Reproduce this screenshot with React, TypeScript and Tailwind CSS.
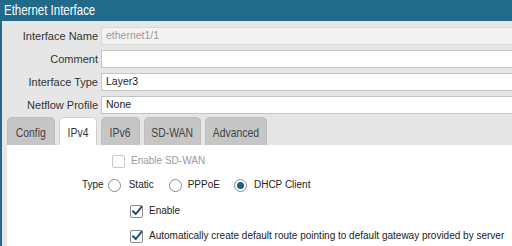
import React from "react";

const sans = "font-['Liberation_Sans',Arial,sans-serif]";

const fields = [
  { label: "Interface Name", value: "ethernet1/1", disabled: true },
  { label: "Comment", value: "" },
  { label: "Interface Type", value: "Layer3" },
  { label: "Netflow Profile", value: "None" },
];

const tabs = [
  { name: "Config", w: "w-[48px]" },
  { name: "IPv4", w: "w-[38px]" },
  { name: "IPv6", w: "w-[39px]" },
  { name: "SD-WAN", w: "w-[57px]" },
  { name: "Advanced", w: "w-[62px]" },
];

const Check = ({ checked, disabled }: { checked?: boolean; disabled?: boolean }) => (
  <span
    className={`relative inline-flex h-[13px] w-[13px] shrink-0 items-center justify-center rounded-[2px] border bg-white ${
      disabled ? "border-[#c8c8c8]" : "border-[#8a8a8a]"
    }`}
  >
    {checked && (
      <svg viewBox="0 0 12 12" className="absolute -top-[1px] left-0 h-[12px] w-[12px]">
        <path d="M2 6.2 L4.8 9 L10.5 1.8" fill="none" stroke="#1d4f7a" strokeWidth="2" strokeLinecap="round" strokeLinejoin="round" />
      </svg>
    )}
  </span>
);

const Radio = ({ checked }: { checked?: boolean }) => (
  <span className="inline-flex h-[13px] w-[13px] shrink-0 items-center justify-center rounded-full border border-[#8a8a8a] bg-white">
    {checked && <span className="h-[7px] w-[7px] rounded-full bg-[#1c5f84]" />}
  </span>
);

export default function App() {
  return (
    <div className={`flex h-[246px] w-[512px] flex-col overflow-hidden bg-[#e6e6e6] ${sans}`}>
      {/* Title */}
      <div className="flex h-[21px] shrink-0 items-center bg-[#216a89] pl-[4px]">
        <span className="inline-block origin-left scale-x-[0.82] whitespace-nowrap text-[14px] text-white">
          Ethernet Interface
        </span>
      </div>

      <div className="flex flex-1 flex-col border-l-2 border-[#216a89]">
        {/* Fields */}
        <div className="flex flex-col gap-[5px] pt-[6px]">
          {fields.map((f) => (
            <div key={f.label} className="flex h-[18px] items-center">
              <div className="w-[99px] whitespace-nowrap pr-[3px] text-right text-[11px] text-[#333]">{f.label}</div>
              <div
                className={`flex h-[18px] flex-1 items-center border-t border-b border-l px-[4px] text-[10.5px] ${
                  f.disabled
                    ? "border-[#d8d8d8] bg-[#f3f3f3] text-[#9a9a9a]"
                    : "border-[#c4c4c4] bg-white text-[#222]"
                }`}
              >
                {f.value}
              </div>
            </div>
          ))}
        </div>

        {/* Tabs */}
        <div className="mt-[3px] flex items-end gap-[4px] pl-[5px]">
          {tabs.map((t) => (
            <div
              key={t.name}
              className={`flex h-[28px] items-center justify-center rounded-t-[5px] border border-b-0 pt-[2px] ${t.w} ${
                t.name === "IPv4"
                  ? "border-[#cfcfcf] bg-white text-[#333]"
                  : "border-[#bdbdbd] bg-[#c6c6c6] text-[#444]"
              }`}
            >
              <span className="inline-block scale-x-[0.8] whitespace-nowrap text-[13px]">{t.name}</span>
            </div>
          ))}
        </div>

        {/* Content */}
        <div className="ml-[5px] flex flex-1 flex-col bg-white text-[10px] leading-[16px] text-[#222]">
          <div className="flex items-center gap-[6px] pl-[105px] pt-[8px] text-[#9a9a9a]">
            <Check disabled />
            <span>Enable SD-WAN</span>
          </div>
          <div className="mt-[8px] flex items-center pl-[75px]">
            <span className="mr-[4px]">Type</span>
            <Radio />
            <span className="ml-[8px] mr-[15px]">Static</span>
            <Radio />
            <span className="ml-[6px] mr-[14px]">PPPoE</span>
            <Radio checked />
            <span className="ml-[7px]">DHCP Client</span>
          </div>
          <div className="mt-[10px] flex items-center gap-[6px] pl-[123px]">
            <Check checked />
            <span>Enable</span>
          </div>
          <div className="mt-[9px] flex items-center gap-[6px] pl-[123px]">
            <Check checked />
            <span className="whitespace-nowrap">
              Automatically create default route pointing to default gateway provided by server
            </span>
          </div>
        </div>
      </div>
    </div>
  );
}
